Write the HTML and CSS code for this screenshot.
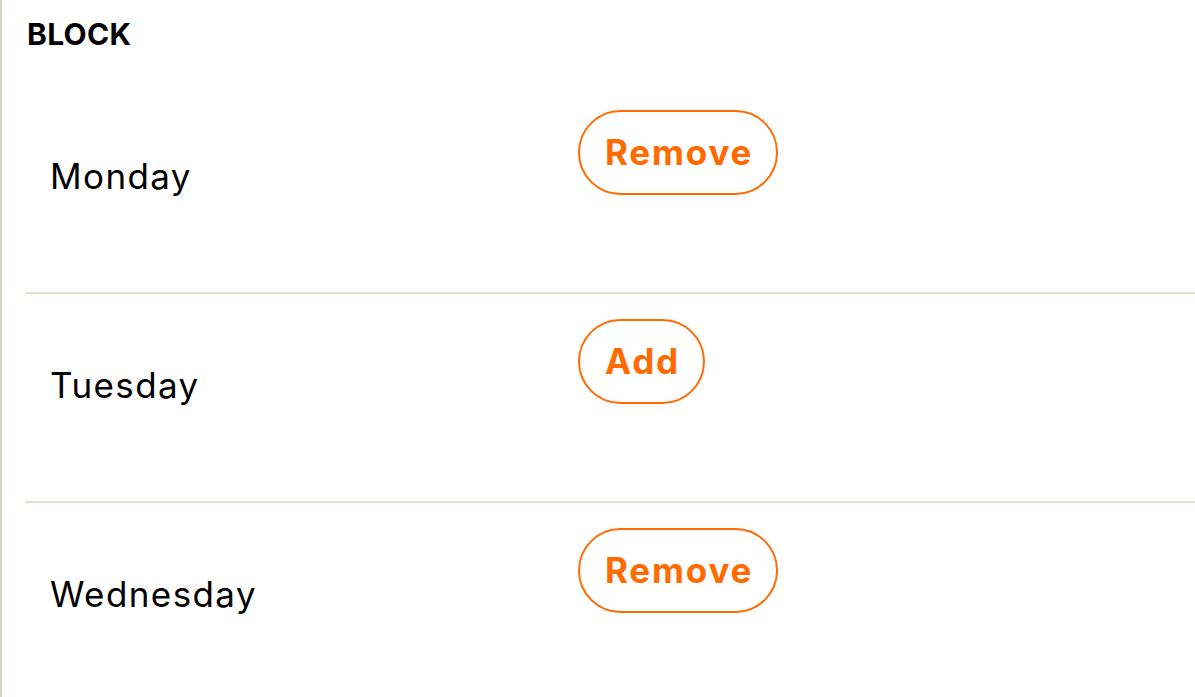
FILE: index.html
```html
<!DOCTYPE html>
<html lang="en">
<head>
<meta charset="utf-8">
<title>Block</title>
<link rel="stylesheet" href="styles.css">
</head>
<body>
<div class="panel">
  <h2 class="title">BLOCK</h2>
  <ul class="days">
    <li class="day">
      <span class="day-name">Monday</span>
      <button class="pill" type="button">Remove</button>
    </li>
    <li class="day">
      <span class="day-name">Tuesday</span>
      <button class="pill" type="button">Add</button>
    </li>
    <li class="day">
      <span class="day-name">Wednesday</span>
      <button class="pill" type="button">Remove</button>
    </li>
  </ul>
</div>
</body>
</html>
```
FILE: styles.css
```css
html, body {
  margin: 0;
  padding: 0;
  background: #ffffff;
}

body {
  font-family: Inter, "Liberation Sans", sans-serif;
  color: #000000;
}

.panel {
  border-left: 2px solid #d3d6bf;
  min-height: 100vh;
  box-sizing: border-box;
  padding-left: 23px;
}

.title {
  margin: 0;
  height: 85px;
  box-sizing: border-box;
  padding-top: 18px;
  padding-left: 2px;
  font-size: 30px;
  line-height: 33px;
  font-weight: 700;
  letter-spacing: 0.3px;
}

.days {
  list-style: none;
  margin: 0;
  padding: 0;
}

.day {
  display: flex;
  align-items: flex-start;
  height: 207px;
  border-bottom: 2px solid #e1e3d2;
  padding-left: 25px;
}

.day:last-child {
  border-bottom: none;
}

.day-name {
  width: 528px;
  flex: none;
  padding-top: 71px;
  font-size: 35px;
  line-height: 41px;
  font-weight: 400;
  letter-spacing: 1.4px;
}

.pill {
  margin-top: 25px;
  height: 85px;
  box-sizing: border-box;
  padding: 20px 23px 20px 25px;
  border: 2px solid #ff6b00;
  border-radius: 999px;
  background: #ffffff;
  color: #ff6b00;
  font-family: inherit;
  font-size: 35px;
  line-height: 41px;
  font-weight: 700;
  letter-spacing: 1.8px;
  cursor: pointer;
}
```
